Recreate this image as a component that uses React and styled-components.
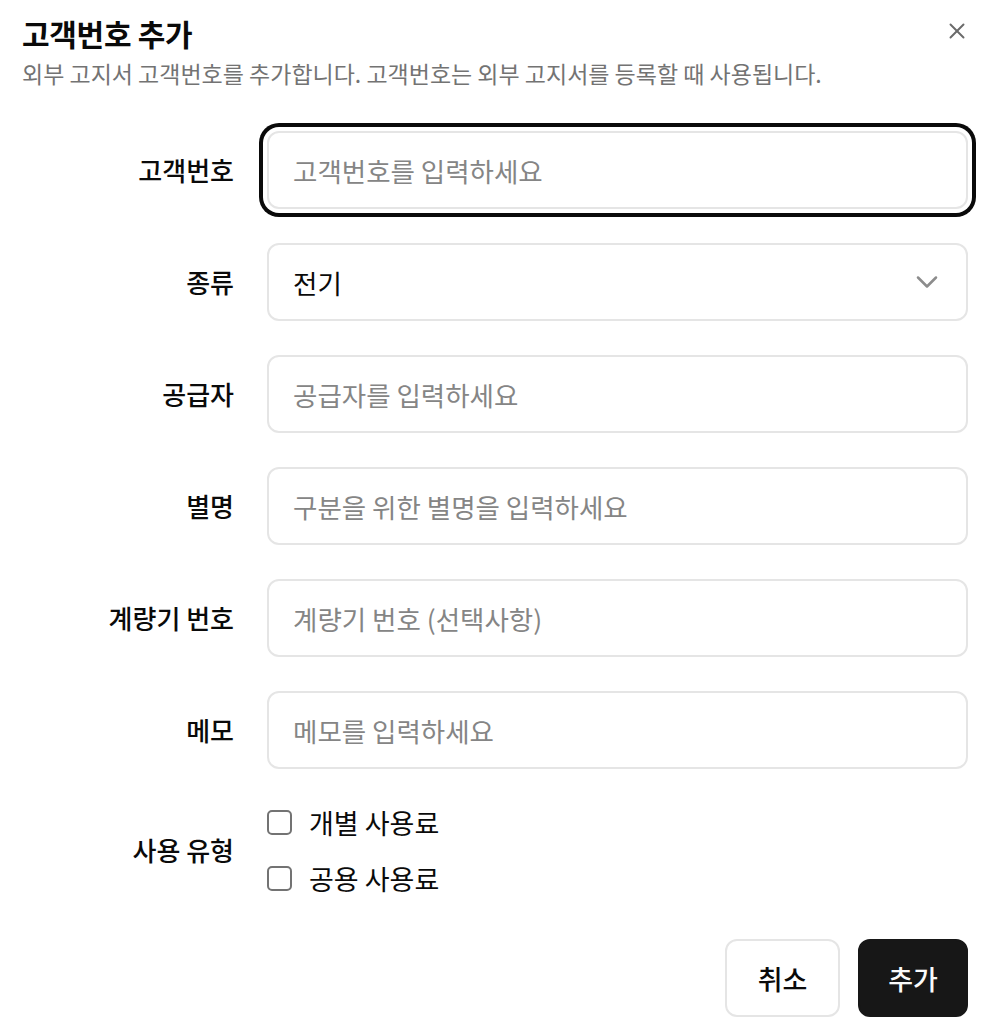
import React from 'react';
import styled, { createGlobalStyle } from 'styled-components';
import { X, ChevronDown } from 'lucide-react';

const GlobalStyle = createGlobalStyle`
  * { box-sizing: border-box; }
  body {
    margin: 0;
    background: #fff;
    font-family: "Noto Sans CJK KR", "Noto Sans", sans-serif;
    color: #0a0a0a;
  }
`;

const Dialog = styled.div`
  position: relative;
  width: 990px;
  padding: 15px 22px 0;
`;

const CloseButton = styled.button`
  position: absolute;
  top: 18px;
  right: 20px;
  width: 26px;
  height: 26px;
  padding: 0;
  border: none;
  background: none;
  color: #6b6b6b;
  display: flex;
  align-items: center;
  justify-content: center;
`;

const Title = styled.h2`
  margin: 0;
  font-size: 30px;
  line-height: 36px;
  font-weight: 700;
  letter-spacing: -0.3px;
`;

const Description = styled.p`
  margin: 6px 0 0;
  font-size: 23px;
  line-height: 32px;
  color: #737373;
`;

const Form = styled.div`
  margin-top: 42px;
  display: flex;
  flex-direction: column;
  gap: 34px;
`;

const Row = styled.div`
  display: grid;
  grid-template-columns: 212px 1fr;
  column-gap: 33px;
  align-items: center;
`;

const Label = styled.label`
  text-align: right;
  font-size: 26px;
  font-weight: 500;
  line-height: 36px;
`;

const Input = styled.input`
  width: 100%;
  height: 78px;
  padding: 0 24px;
  border: 2px solid #e5e5e5;
  border-radius: 12px;
  font-family: inherit;
  font-size: 26.5px;
  color: #0a0a0a;
  background: #fff;
  outline: none;
  box-shadow: ${(p) => (p.$focused ? '0 0 0 4px #fff, 0 0 0 8px #0a0a0a' : 'none')};

  &::placeholder {
    color: #858585;
  }
`;

const Select = styled.div`
  height: 78px;
  padding: 0 21px 0 24px;
  border: 2px solid #e5e5e5;
  border-radius: 12px;
  display: flex;
  align-items: center;
  justify-content: space-between;
  font-size: 26.5px;

  svg {
    color: #8c8c8c;
  }
`;

const CheckGroup = styled.div`
  display: flex;
  flex-direction: column;
  gap: 18px;
`;

const CheckItem = styled.label`
  display: flex;
  align-items: center;
  gap: 17px;
  height: 38px;
  font-size: 27px;
  font-weight: 400;
`;

const Box = styled.span`
  width: 25px;
  height: 25px;
  border: 2px solid #737373;
  border-radius: 5px;
  flex-shrink: 0;
`;

const Footer = styled.div`
  margin-top: 42px;
  display: flex;
  justify-content: flex-end;
  gap: 18px;
`;

const Button = styled.button`
  height: 78px;
  width: ${(p) => (p.$primary ? '110px' : '115px')};
  padding: 0;
  border-radius: 12px;
  font-family: inherit;
  font-size: 27px;
  font-weight: 500;
  border: 2px solid ${(p) => (p.$primary ? '#171717' : '#e5e5e5')};
  background: ${(p) => (p.$primary ? '#171717' : '#fff')};
  color: ${(p) => (p.$primary ? '#fafafa' : '#0a0a0a')};
`;

const fields = [
  { label: '공급자', placeholder: '공급자를 입력하세요' },
  { label: '별명', placeholder: '구분을 위한 별명을 입력하세요' },
  { label: '계량기 번호', placeholder: '계량기 번호 (선택사항)' },
  { label: '메모', placeholder: '메모를 입력하세요' },
];

export default function App() {
  return (
    <Dialog>
      <GlobalStyle />
      <CloseButton aria-label="닫기">
        <X size={26} strokeWidth={1.8} />
      </CloseButton>
      <Title>고객번호 추가</Title>
      <Description>외부 고지서 고객번호를 추가합니다. 고객번호는 외부 고지서를 등록할 때 사용됩니다.</Description>

      <Form>
        <Row>
          <Label>고객번호</Label>
          <Input $focused placeholder="고객번호를 입력하세요" />
        </Row>
        <Row>
          <Label>종류</Label>
          <Select>
            <span>전기</span>
            <ChevronDown size={36} strokeWidth={1.7} />
          </Select>
        </Row>
        {fields.map((f) => (
          <Row key={f.label}>
            <Label>{f.label}</Label>
            <Input placeholder={f.placeholder} />
          </Row>
        ))}
        <Row>
          <Label>사용 유형</Label>
          <CheckGroup>
            <CheckItem>
              <Box />
              개별 사용료
            </CheckItem>
            <CheckItem>
              <Box />
              공용 사용료
            </CheckItem>
          </CheckGroup>
        </Row>
      </Form>

      <Footer>
        <Button>취소</Button>
        <Button $primary>추가</Button>
      </Footer>
    </Dialog>
  );
}
